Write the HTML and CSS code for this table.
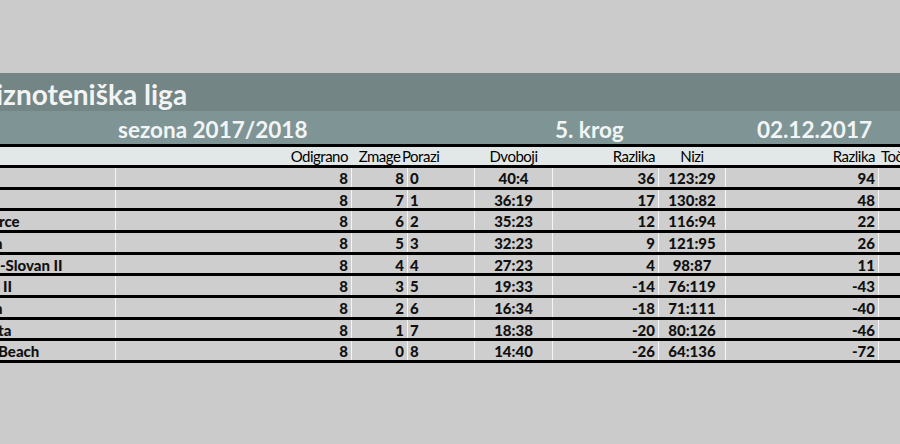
FILE: index.html
```html
<!DOCTYPE html>
<html lang="sl">
<head>
<meta charset="utf-8">
<title>Namiznoteniška liga</title>
<link rel="stylesheet" href="styles.css">
</head>
<body>
<div class="sheet">
  <div class="title"><span class="title-text">iznoteniška liga</span></div>
  <div class="subtitle">
    <div class="sub-season">sezona 2017/2018</div>
    <div class="sub-round">5. krog</div>
    <div class="sub-date">02.12.2017</div>
  </div>
  <div class="row head">
    <div class="c"></div>
    <div class="c r">Odigrano</div>
    <div class="c m">Zmage</div>
    <div class="c l porazi">Porazi</div>
    <div class="c m">Dvoboji</div>
    <div class="c r">Razlika</div>
    <div class="c m">Nizi</div>
    <div class="c r">Razlika</div>
    <div class="c l">Točke</div>
  </div>
  <div class="row">
    <div class="c name"></div><div class="c r">8</div><div class="c r">8</div><div class="c l">0</div><div class="c m">40:4</div><div class="c r">36</div><div class="c m">123:29</div><div class="c r">94</div><div class="c l"></div>
  </div>
  <div class="row">
    <div class="c name"></div><div class="c r">8</div><div class="c r">7</div><div class="c l">1</div><div class="c m">36:19</div><div class="c r">17</div><div class="c m">130:82</div><div class="c r">48</div><div class="c l"></div>
  </div>
  <div class="row">
    <div class="c name"><span class="cut1">rce</span></div><div class="c r">8</div><div class="c r">6</div><div class="c l">2</div><div class="c m">35:23</div><div class="c r">12</div><div class="c m">116:94</div><div class="c r">22</div><div class="c l"></div>
  </div>
  <div class="row">
    <div class="c name"><span class="cut4">n</span></div><div class="c r">8</div><div class="c r">5</div><div class="c l">3</div><div class="c m">32:23</div><div class="c r">9</div><div class="c m">121:95</div><div class="c r">26</div><div class="c l"></div>
  </div>
  <div class="row">
    <div class="c name"><span class="cut0">-Slovan II</span></div><div class="c r">8</div><div class="c r">4</div><div class="c l">4</div><div class="c m">27:23</div><div class="c r">4</div><div class="c m">98:87</div><div class="c r">11</div><div class="c l"></div>
  </div>
  <div class="row">
    <div class="c name"><span class="pad3">II</span></div><div class="c r">8</div><div class="c r">3</div><div class="c l">5</div><div class="c m">19:33</div><div class="c r">-14</div><div class="c m">76:119</div><div class="c r">-43</div><div class="c l"></div>
  </div>
  <div class="row">
    <div class="c name"><span class="cut4">n</span></div><div class="c r">8</div><div class="c r">2</div><div class="c l">6</div><div class="c m">16:34</div><div class="c r">-18</div><div class="c m">71:111</div><div class="c r">-40</div><div class="c l"></div>
  </div>
  <div class="row">
    <div class="c name"><span class="cut2">ta</span></div><div class="c r">8</div><div class="c r">1</div><div class="c l">7</div><div class="c m">18:38</div><div class="c r">-20</div><div class="c m">80:126</div><div class="c r">-46</div><div class="c l"></div>
  </div>
  <div class="row">
    <div class="c name"><span class="cut2">Beach</span></div><div class="c r">8</div><div class="c r">0</div><div class="c l">8</div><div class="c m">14:40</div><div class="c r">-26</div><div class="c m">64:136</div><div class="c r">-72</div><div class="c l"></div>
  </div>
</div>
</body>
</html>
```
FILE: styles.css
```css
html, body {
  margin: 0;
  padding: 0;
}
body {
  background: #cbcbcb;
  font-family: Lato, "Open Sans", "Liberation Sans", sans-serif;
  width: 900px;
  height: 444px;
  overflow: hidden;
}
.sheet {
  padding-top: 73px;
}
.title {
  height: 38px;
  background: #738585;
  color: #f2f4f4;
  font-weight: 700;
  font-size: 28px;
  line-height: 38px;
  white-space: nowrap;
  overflow: hidden;
}
.title-text {
  display: inline-block;
  margin-left: -4px;
  padding-top: 2px;
}
.subtitle {
  height: 33px;
  background: #7f9494;
  color: #f2f5f5;
  font-weight: 700;
  font-size: 22.5px;
  line-height: 38px;
  display: grid;
  grid-template-columns: 116px 437px 325px 1fr;
  border-bottom: 3px solid #000;
  white-space: nowrap;
  overflow: hidden;
}
.sub-season {
  grid-column: 2;
  grid-row: 1;
  margin-left: 2px;
}
.sub-round {
  grid-column: 3;
  grid-row: 1;
  padding-left: 2px;
}
.sub-date {
  grid-column: 3;
  grid-row: 1;
  text-align: right;
  padding-right: 6px;
}
.row {
  display: grid;
  grid-template-columns: 116px 236px 56px 67px 78px 106px 67px 153px 1fr;
  height: 18.67px;
  border-bottom: 3px solid #000;
  background: #cecece;
  font-weight: 900;
  font-size: 15px;
  line-height: 21px;
  color: #111;
  white-space: nowrap;
}
.row .c {
  border-right: 1px solid #f4f4f4;
  overflow: hidden;
}
.row .c:last-child {
  border-right: none;
}
.head {
  background: #e2e8e8;
  height: 18px;
  font-weight: 400;
  font-size: 15px;
  line-height: 19px;
  letter-spacing: -0.5px;
  color: #000;
}
.head .c {
  border-right-color: transparent;
  overflow: visible;
}
.c.r {
  text-align: right;
  padding-right: 3px;
}
.c.l {
  text-align: left;
  padding-left: 2px;
}
.c.m {
  text-align: center;
}
.porazi {
  margin-left: -8px;
}
.name {
  text-align: left;
}
.cut1 { margin-left: -1px; }
.cut4 { margin-left: -6px; }
.cut0 { margin-left: 0; }
.cut2 { margin-left: -2px; }
.pad3 { margin-left: 3px; }
```
